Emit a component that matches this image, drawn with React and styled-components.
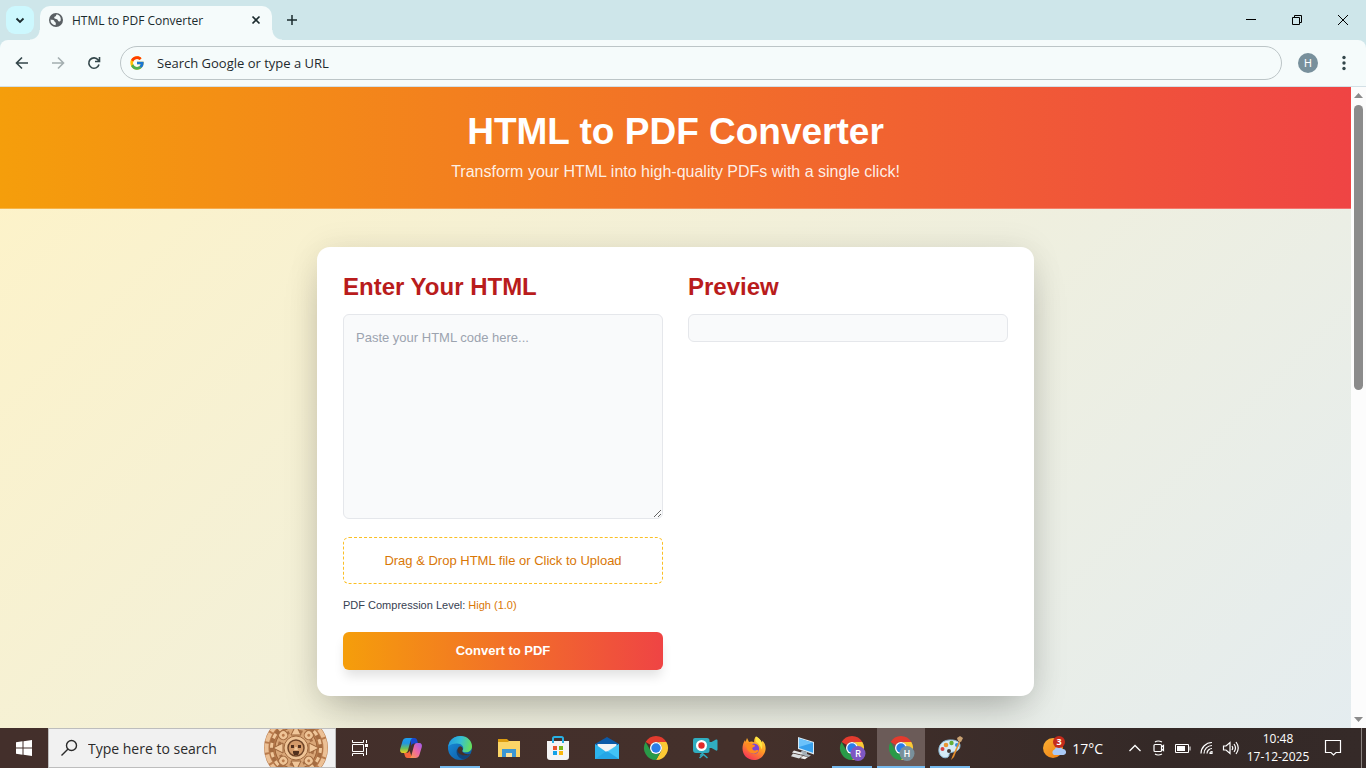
import React from "react";
import styled, { createGlobalStyle, css } from "styled-components";
import { FcGoogle } from "react-icons/fc";

const uiFont = `"Segoe UI", "Open Sans", "Noto Sans", sans-serif`;
const pageFont = `"Liberation Sans", Arial, sans-serif`;
const sunset = "linear-gradient(90deg, #f59e0b, #ef4444)";

const GlobalStyle = createGlobalStyle`
  *, *::before, *::after { box-sizing: border-box; }
  body { margin: 0; overflow: hidden; font-family: ${uiFont}; }
  button, input, textarea { font: inherit; color: inherit; margin: 0; }
  button { border: 0; padding: 0; background: none; cursor: pointer; }
  h1, h2, p { margin: 0; }
  svg { display: block; flex: none; }
`;

const Desktop = styled.div`
  height: 100vh;
  display: flex;
  flex-direction: column;
`;

/* Browser chrome */

const TabStrip = styled.header`
  height: 40px;
  flex: none;
  display: flex;
  align-items: center;
  background: #cee6ea;
  color: #1b2b2e;
`;

const TabSearch = styled.button`
  width: 28px;
  height: 28px;
  margin: 0 6px;
  display: grid;
  place-items: center;
  border-radius: 9px;
  background: #cdf8fe;
`;

const Tab = styled.div`
  position: relative;
  width: 232px;
  height: 34px;
  align-self: flex-end;
  display: flex;
  align-items: center;
  gap: 8px;
  padding: 0 8px 6px;
  margin-right: 10px;
  border-radius: 10px 10px 0 0;
  background: #f5fbfb;
  font-size: 12px;

  &::before, &::after {
    content: "";
    position: absolute;
    bottom: 0;
    width: 10px;
    height: 10px;
  }
  &::before {
    right: 100%;
    background: radial-gradient(circle at 0 0, transparent 9px, #f5fbfb 10px);
  }
  &::after {
    left: 100%;
    background: radial-gradient(circle at 100% 0, transparent 9px, #f5fbfb 10px);
  }
`;

const TabTitle = styled.span`
  flex: 1;
  white-space: nowrap;
`;

const StripButton = styled.button`
  width: ${(p) => p.$w}px;
  height: ${(p) => p.$h || 28}px;
  display: grid;
  place-items: center;
`;

const WindowControls = styled.div`
  margin-left: auto;
  display: flex;
`;

const ToolbarBack = styled.div`
  flex: none;
  background: #cee6ea;
`;

const Toolbar = styled.nav`
  height: 47px;
  display: flex;
  align-items: center;
  padding: 0 14px 0 4px;
  border-radius: 8px 8px 0 0;
  border-bottom: 1px solid #d3e0e6;
  background: #f5fbfb;
  color: #33464a;
`;

const NavButton = styled.button`
  width: 36px;
  height: 32px;
  display: grid;
  place-items: center;
  color: ${(p) => (p.$faded ? "#a3aeb0" : "#33464a")};
`;

const Omnibox = styled.label`
  flex: 1;
  height: 34px;
  margin: 0 16px 0 8px;
  padding: 0 8px;
  display: flex;
  align-items: center;
  gap: 12px;
  border: 1px solid #bcc5c7;
  border-radius: 17px;
`;

const PlainInput = styled.input`
  flex: 1;
  min-width: 0;
  padding: 0;
  border: 0;
  outline: 0;
  background: transparent;
  font-size: ${(p) => p.$size}px;
  &::placeholder { color: ${(p) => p.$color}; opacity: 1; }
`;

const Profile = styled.button`
  width: 20px;
  height: 20px;
  margin-right: 18px;
  border-radius: 50%;
  background: #78909c;
  color: #fff;
  font: 11px Roboto, sans-serif;
`;

/* Page */

const Viewport = styled.div`
  flex: 1;
  min-height: 0;
  display: flex;
`;

const Page = styled.div`
  flex: 1;
  min-width: 0;
  overflow: hidden;
  font-family: ${pageFont};
  background: linear-gradient(135deg, #fef3c7, #dbeafe) 0 0 / 100% 1363px no-repeat;
`;

const Hero = styled.header`
  padding: 26px 20px;
  text-align: center;
  color: #fff;
  background: ${sunset};
  border-bottom: 1px solid rgba(255, 255, 255, 0.25);
`;

const HeroTitle = styled.h1`
  font-size: 37px;
  line-height: 38px;
  font-weight: 700;
`;

const HeroText = styled.p`
  margin-top: 11px;
  font-size: 16px;
  line-height: 20px;
  color: rgba(255, 255, 255, 0.9);
`;

const Card = styled.main`
  max-width: 717px;
  margin: 38px auto;
  padding: 26px;
  display: grid;
  grid-template-columns: 1fr 1fr;
  gap: 25px;
  border-radius: 13px;
  background: #fff;
  box-shadow: 0 20px 40px -10px rgba(0, 0, 0, 0.25), 0 0 32px rgba(0, 0, 0, 0.08);
`;

const Column = styled.section`
  display: flex;
  flex-direction: column;
`;

const Heading = styled.h2`
  margin-bottom: 13px;
  font-size: 24px;
  line-height: 28px;
  color: #b91c1c;
`;

const field = css`
  border: 1px solid #e5e7eb;
  border-radius: 6px;
  background: #f9fafb;
`;

const CodeInput = styled.textarea`
  ${field}
  display: block;
  width: 100%;
  height: 205px;
  padding: 13px 12px;
  font-size: 13px;
  line-height: 19px;
  outline: 0;
  resize: both;
  &::placeholder { color: #9ca3af; }
`;

const PreviewBox = styled.div`
  ${field}
  height: 28px;
`;

const DropZone = styled.label`
  height: 47px;
  margin-top: 18px;
  display: grid;
  place-items: center;
  border: 1px dashed #fbbf24;
  border-radius: 6px;
  color: #d97706;
  font-size: 13px;
  cursor: pointer;
  input { display: none; }
`;

const Level = styled.p`
  margin: 13px 0 19px;
  font-size: 11px;
  line-height: 16px;
  color: #374151;
  span { color: #d97706; }
`;

const ConvertButton = styled.button`
  height: 38px;
  padding-bottom: 2px;
  border-radius: 6px;
  color: #fff;
  font-size: 13px;
  font-weight: 700;
  background: ${sunset};
  box-shadow: 0 8px 12px -2px rgba(0, 0, 0, 0.12);
`;

const ScrollRail = styled.div`
  width: 15px;
  flex: none;
  display: flex;
  flex-direction: column;
  align-items: center;
  padding: 6px 0;
  background: #fcfcfc;
`;

const ScrollThumb = styled.div`
  width: 9px;
  height: 47%;
  margin: 7px 0 auto;
  max-height: 285px;
  border-radius: 5px;
  background: #8b8b8b;
`;

/* Taskbar */

const Taskbar = styled.footer`
  height: 40px;
  flex: none;
  display: flex;
  align-items: stretch;
  color: #fff;
  background: linear-gradient(90deg, #432f2b, #44302b 55%, #342927 85%, #352a28);
`;

const StartButton = styled.button`
  width: 48px;
  display: grid;
  place-items: center;
`;

const SearchBox = styled.label`
  width: 288px;
  display: flex;
  align-items: center;
  gap: 10px;
  padding: 0 7px 0 11px;
  overflow: hidden;
  border: 1px solid #bdbdbd;
  background: #f1f1f1;
  color: #2b2b2b;
`;

const AppList = styled.div`
  display: flex;
  gap: 1px;
  & > :first-child { margin-right: 2px; }
`;

const AppButton = styled.button`
  width: 48px;
  display: grid;
  place-items: center;
  background: ${(p) => (p.$active ? "#6b5b58" : "transparent")};
  background-image: ${(p) => (p.$open || p.$active ? "linear-gradient(#76b9ed, #76b9ed)" : "none")};
  background-repeat: no-repeat;
  background-position: center bottom;
  background-size: ${(p) => (p.$active ? "100%" : "40px")} 2px;
`;

const Tray = styled.div`
  margin-left: auto;
  display: flex;
  align-items: center;
`;

const Weather = styled.button`
  display: flex;
  align-items: center;
  gap: 6px;
  margin-right: 20px;
  font-size: 14px;
`;

const TrayButton = styled.button`
  width: 24px;
  height: 40px;
  display: grid;
  place-items: center;
`;

const Clock = styled.time`
  width: 70px;
  text-align: center;
  font-size: 12px;
  line-height: 18px;
`;

const Notifications = styled.button`
  width: 40px;
  height: 40px;
  margin-right: 8px;
  display: grid;
  place-items: center;
`;

const ShowDesktop = styled.button`
  width: 5px;
  height: 40px;
  border-left: 1px solid #8a8380;
`;

/* Drawings */

const Line = ({ w = 16, h = w, d, sw = 1, box, ...rest }) => (
  <svg width={w} height={h} viewBox={box || `0 0 ${w} ${h}`} fill="none" stroke="currentColor" strokeWidth={sw} {...rest}>
    <path d={d} />
  </svg>
);

const Globe = () => (
  <svg width="16" height="16" viewBox="0 0 16 16">
    <circle cx="8" cy="8" r="7" fill="#5a6064" />
    <path d="M8.5 2.4c-.8 1.2-.3 1.8-1.4 2.2-.9.3-1.2 1.2-.5 2 .8.7 2.2.3 3 1.2.5.7.2 1.4 1.3 1.6.8.1 1.2.2 1.7-.7A5.400 5.400 0 0 0 9.400 2.500zM2.500 7.400c.7.2 2.600.3 3.300.9.7.7.4 1.600 1.500 1.900.8.3.6 1.500.2 3.100A5.500 5.500 0 0 1 2.500 7.400z" fill="#f5fbfb" />
  </svg>
);

const ChromeLogo = ({ badge, badgeColor }) => (
  <svg width="28" height="26" viewBox="-2 0 28 26">
    <path d="M1.600 7A12 12 0 0 1 22.400 7H12a6 6 0 0 0-5.200 3z" fill="#e33b2e" />
    <path d="M22.400 7A12 12 0 0 1 12 25l5.200-9A6 6 0 0 0 12 7z" fill="#fcc934" />
    <path d="M12 25A12 12 0 0 1 1.600 7l5.200 9A6 6 0 0 0 17.200 16z" fill="#299a48" />
    <circle cx="12" cy="13" r="6" fill="#fff" />
    <circle cx="12" cy="13" r="4.700" fill="#2b7de9" />
    {badge && (
      <>
        <circle cx="18" cy="18.500" r="7.500" fill={badgeColor} />
        <text x="18" y="22" fill="#fff" fontFamily="Roboto" fontSize="9" fontWeight="500" textAnchor="middle">{badge}</text>
      </>
    )}
  </svg>
);

const Copilot = () => (
  <svg width="24" height="24" viewBox="0 0 24 24">
    <defs>
      <linearGradient id="cpA" x1="0" y1="0" x2="0" y2="1"><stop stopColor="#1d9ff0" /><stop offset=".35" stopColor="#2095e0" /><stop offset=".7" stopColor="#6cc05a" /><stop offset="1" stopColor="#f2cf1f" /></linearGradient>
      <linearGradient id="cpB" x1="1" y1="0" x2="0" y2="1"><stop stopColor="#9e5bf2" /><stop offset=".5" stopColor="#ef6aa0" /><stop offset="1" stopColor="#f9a13c" /></linearGradient>
    </defs>
    <path d="M11 2h4.500c1.700 0 2.300 1 2.700 2.300l.8 3.200h-4c-1.500 0-2.200 1-2.500 2.500z" fill="#1748cf" />
    <path d="M13 22H8.500c-1.700 0-2.300-1-2.700-2.500L5 17h2.500c1.800 0 2.700-1 3.100-2.500z" fill="#f2663b" />
    <path d="M7.500 2H14c-1.300 0-1.900 1-2.300 2.300L9.200 13.500C8.700 15.700 8 17 6 17H3.800C1.400 17 .7 15.300 1.200 13L3.600 5C4.200 3 5.500 2 7.500 2z" fill="url(#cpA)" />
    <path d="M16.500 22H10c1.300 0 1.900-1 2.300-2.300l2.500-9.200c.5-2.200 1.200-3.500 3.200-3.500h2.200c2.400 0 3.100 1.700 2.600 4L20.400 19c-.6 2-1.900 3-3.900 3z" fill="url(#cpB)" />
  </svg>
);

const Edge = () => (
  <svg width="24" height="24" viewBox="0 0 24 24">
    <defs>
      <linearGradient id="edA" x1="0" y1=".3" x2="1" y2=".5"><stop stopColor="#239be0" /><stop offset=".5" stopColor="#36bfd3" /><stop offset="1" stopColor="#68df58" /></linearGradient>
      <linearGradient id="edB" x1="0" y1="0" x2="1" y2="1"><stop stopColor="#198fdf" /><stop offset="1" stopColor="#0c5498" /></linearGradient>
    </defs>
    <circle cx="12" cy="12" r="12" fill="url(#edB)" />
    <path d="M.3 10.500C1.300 4 6.500 0 12.500 0 19.500 0 24 5 24 10.300c0 4-3 6-6 6-2.500 0-4.300-.8-3.600-1.900C17 11 13.500 7.500 9 7.500c-4 0-7 1-8.700 3z" fill="url(#edA)" />
    <path d="M9.300 12.500C6.800 18 11 23 16 23.300c2.300-.3 4.800-2.300 6.300-4.800-5.800 2.600-12 .2-13-6z" fill="#10457c" />
    <path d="M14.200 14.700c1.300-1.500.6-4-1.700-4.500-2.200.3-3.500 2.600-3 4.800.7 3.200 5.500 5.500 10.500 4.300 1.500-.4 3-1 2.500-1.300-3 .7-8.500-.5-8.300-3.300z" fill="#432f2b" />
  </svg>
);

const Explorer = () => (
  <svg width="24" height="24" viewBox="0 0 24 24">
    <path d="M1 3h9l2 2v4H1z" fill="#dc9c10" />
    <path d="M1 6h10l1-1h11v16H1z" fill="#fbd567" />
    <path d="M5 21v-8h14v8h-4v-4H9v4z" fill="#3b97d3" />
    <path d="M9 17h6v4H9z" fill="#fae19b" />
  </svg>
);

const Store = () => (
  <svg width="24" height="24" viewBox="0 0 24 24">
    <path d="M1 5h22v16q0 3-3 3H4q-3 0-3-3z" fill="#f4f4f4" />
    <path d="M7 7V2.500Q7 1 8.500 1h7Q17 1 17 2.500V7" fill="none" stroke="#28b1e4" strokeWidth="2" />
    <path d="M7 10h4v4H7z" fill="#e8542c" /><path d="M13 10h4v4h-4z" fill="#7cb817" />
    <path d="M7 15h4v4H7z" fill="#12a2e8" /><path d="M13 15h4v4h-4z" fill="#fbb70b" />
  </svg>
);

const Mail = () => (
  <svg width="24" height="22" viewBox="0 0 24 22">
    <path d="M0 7l12-7 12 7v5H0z" fill="#0c5aa8" />
    <path d="M2.500 7h19v6L12 17 2.500 13z" fill="#f3f3f5" />
    <path d="M0 7l12 8.500L24 7v15H0z" fill="#2cb4ed" />
    <path d="M0 22L24 7v15z" fill="#48c8f8" opacity=".75" />
    <path d="M0 22l12-8 12 8z" fill="#1796dd" opacity=".65" />
  </svg>
);

const Recorder = () => (
  <svg width="26" height="24" viewBox="0 0 26 24">
    <path d="M3 2h12q2.500 0 2.500 2.500V6h2L24 3.500q1.500-.5 1.500 1v9q0 1.500-1.500 1L19.500 12h-2v2.500q0 2.500-2.500 2.500H4q-3 0-3-3V4q0-2 2-2z" fill="#30adc0" />
    <circle cx="9.500" cy="9.500" r="5.500" fill="#fff" />
    <circle cx="9.500" cy="9.500" r="3.200" fill="#e22b2b" />
    <path d="M7.500 22l4-3.500 4 3.500M11 17l-3 2.500" fill="none" stroke="#30adc0" strokeWidth="1.500" />
  </svg>
);

const Firefox = () => (
  <svg width="24" height="24" viewBox="0 0 24 24">
    <defs>
      <linearGradient id="ffA" x1=".8" y1="0" x2=".2" y2="1"><stop stopColor="#ffe23d" /><stop offset=".45" stopColor="#ff9a24" /><stop offset="1" stopColor="#f52a5c" /></linearGradient>
    </defs>
    <path d="M14 .5c3 1.700 5 3.500 5.700 6 .6-.4.7-1 .6-2C23 7 24 10.500 23.500 14 22.500 20 17.500 24 12 24 5.500 24 .5 19 .5 12.500c0-3 .9-6 2.500-8.500l.5 2L5 2l2 4c2-1 4-.5 5.200.5C12 4 12.500 2 14 .5z" fill="url(#ffA)" />
    <circle cx="12" cy="12.800" r="5.200" fill="#7b45d6" />
    <path d="M4 7.500c3-1.500 5.500-.8 6.500 1 1.300.2 3 .6 2.500 1.500-.8 1.300-2.200 1-2.700 2-.2 2 1.700 3.200 3.700 2.200 1.300-.5 2.200-.3 2.700.3-1.300 3-5 4-8 2.500C5.500 15 4 12 4 7.500z" fill="#ff8a1f" />
    <path d="M14 .5c3 1.700 5 3.500 5.700 6 .9 2.200.8 5-.2 7-.6-3.800-3-6-5.300-7.500-.8-1.500-.8-4-.2-5.500z" fill="#ffe642" />
  </svg>
);

const RemotePc = () => (
  <svg width="26" height="24" viewBox="0 0 26 24">
    <path d="M8 1l16 5v12.500L8 13z" fill="#dbeaf4" />
    <path d="M9 2.500l14 4.300v10L9 12z" fill="#37a0ed" />
    <path d="M9 2.500l14 4.300L9 11z" fill="#6bc2fa" />
    <path d="M12 14.500l5 1.500v2l4 1.500-2.500 1.500-9-3z" fill="#a5b0b8" />
    <path d="M4 14.500l9 2.500-2 1.500-9-2z" fill="#e6e8e9" />
    <path d="M3 17.500l10 2.300-4 2.700-8-2.200z" fill="#d9dddf" />
    <path d="M13 20l5 1-3 2.200-4.500-1z" fill="#f3f3f3" />
  </svg>
);

const Paint = () => (
  <svg width="26" height="26" viewBox="0 0 26 26">
    <path d="M12 5C5 5.500 1 10.500 2 17c.8 5 6 7 9 5 2-1.500 0-3.500 3-4.500 5-1 9-2 9-7 0-4-5-6-11-5.500z" fill="#d5ebf7" stroke="#8bb9d5" />
    <circle cx="9" cy="10" r="2.300" fill="#e99633" /><circle cx="5.500" cy="14" r="2" fill="#d94141" />
    <circle cx="14.500" cy="8" r="2.200" fill="#62ae36" /><circle cx="20" cy="10" r="2" fill="#378ed7" />
    <circle cx="12" cy="16" r="2" fill="#453a38" />
    <path d="M23 4l-7.500 17-1.500 4 3-3L24 5z" fill="#e7902f" />
    <path d="M20 3l3-2 3 2-2 4-3-1z" fill="#caa272" />
  </svg>
);

const SunStone = () => (
  <svg width="64" height="64" viewBox="-32 -32 64 64">
    <circle r="32" fill="#b97b4c" />
    <circle r="29.500" fill="none" stroke="#ecc095" strokeWidth="4" strokeDasharray="9 2" />
    <circle r="24.500" fill="none" stroke="#a56c41" strokeWidth="4" />
    <circle r="24.500" fill="none" stroke="#f0c699" strokeWidth="3" strokeDasharray="5 4.600" />
    <circle r="21" fill="#d9a677" stroke="#9a6238" />
    <circle r="17" fill="none" stroke="#a87046" strokeWidth="3" strokeDasharray="6 7.350" />
    {[0, 90, 180, 270].map((a) => (
      <path key={a} d="M-5-13L0-23L5-13z" fill="#f0c699" stroke="#9a6238" transform={`rotate(${a})`} />
    ))}
    {[45, 135, 225, 315].map((a) => (
      <g key={a} transform={`rotate(${a})`}>
        <circle cy="-18" r="4.500" fill="#efc496" stroke="#a0693f" />
        <circle cy="-18" r="1.500" fill="#b97b4c" />
      </g>
    ))}
    <circle r="12" fill="#efc496" stroke="#a0693f" />
    <circle r="8" fill="#d39a69" stroke="#6f4427" strokeWidth="1.500" />
    <path d="M-5-3h3v3h-3zM2-3h3v3H2zM-3 3h6v2l-1 2h-4l-1-2z" fill="#51301d" />
    <path d="M-1-1h2l1 3h-4z" fill="#f0c699" />
  </svg>
);

const WeatherIcon = () => (
  <svg width="24" height="24" viewBox="0 0 24 24">
    <defs><linearGradient id="sun" x1="0" y1="0" x2="1" y2="1"><stop stopColor="#fbb034" /><stop offset="1" stopColor="#ee7d11" /></linearGradient></defs>
    <circle cx="11" cy="12" r="10" fill="url(#sun)" />
    <path d="M12 19a3 3 0 0 1 .5-5.500 4.500 4.500 0 0 1 8-.5 3 3 0 0 1 1 6z" fill="#a9c9f6" />
    <circle cx="17" cy="6" r="6" fill="#c42b1c" />
    <text x="17" y="9" fill="#fff" fontFamily="Open Sans" fontSize="9" fontWeight="700" textAnchor="middle">3</text>
  </svg>
);

const apps = [
  {
    name: "Task view",
    icon: (
      <svg width="18" height="18" viewBox="0 0 18 18" fill="none" stroke="#fff">
        <path d="M1.500 1v2.500h11V1M1.500 17v-2.500h11V17M1.500 5.500h11v7h-11zM15.500 1v3M15.500 9v7" />
        <path d="M14 5h3v3h-3z" fill="#fff" stroke="none" />
      </svg>
    ),
  },
  { name: "Copilot", icon: <Copilot /> },
  { name: "Microsoft Edge", icon: <Edge />, open: true },
  { name: "File Explorer", icon: <Explorer /> },
  { name: "Microsoft Store", icon: <Store /> },
  { name: "Mail", icon: <Mail /> },
  { name: "Google Chrome", icon: <ChromeLogo /> },
  { name: "Screen recorder", icon: <Recorder /> },
  { name: "Firefox", icon: <Firefox /> },
  { name: "Remote desktop", icon: <RemotePc /> },
  { name: "Chrome, profile R", icon: <ChromeLogo badge="R" badgeColor="#7e57c2" />, open: true },
  { name: "Chrome, profile H", icon: <ChromeLogo badge="H" badgeColor="#78909c" />, active: true },
  { name: "Paint", icon: <Paint />, open: true },
];

const tray = [
  { name: "Show hidden icons", icon: <Line w={14} d="M1.500 10L7 4.500 12.500 10" sw={1.300} /> },
  { name: "Meet Now", icon: <Line w={16} d="M4 4.500h5.500q1 0 1 1v5q0 1-1 1H4q-1 0-1-1v-5q0-1 1-1zM10.500 7l2-1.500v5l-2-1.500M4 2q3-2 7 0M4 14q3 2 7 0" sw={1.200} /> },
  { name: "Battery", icon: <svg width="16" height="16" viewBox="0 0 16 16"><path d="M.5 4.500h13v8h-13zM15 6.500v4" fill="none" stroke="#fff" /><path d="M2 6h8v5H2z" fill="#fff" /></svg> },
  { name: "Network", icon: <Line w={16} d="M2 13.500A11 11 0 0 1 13 2.500M5 13.500a8 8 0 0 1 8-8M8 13.500a5 5 0 0 1 5-5M11 13.500a2 2 0 0 1 2-2v2z" sw={1.200} /> },
  { name: "Volume", icon: <Line w={18} h={16} d="M1.500 6h2.500l4-3.500v11L4 10H1.500zM10 6q1.500 2 0 4M12 4q3 4 0 8M14 2q4.500 6 0 12" sw={1.200} /> },
];

export default function App() {
  return (
    <Desktop>
      <GlobalStyle />
      <TabStrip>
        <TabSearch aria-label="Search tabs"><Line w={10} d="M1.500 3.500L5 7l3.500-3.500" sw={1.800} /></TabSearch>
        <Tab>
          <Globe />
          <TabTitle>HTML to PDF Converter</TabTitle>
          <StripButton $w={16} aria-label="Close tab"><Line w={10} d="M1.500 1.500l7 7m0-7l-7 7" sw={1.700} /></StripButton>
        </Tab>
        <StripButton $w={20} aria-label="New tab"><Line w={12} d="M6 1v10M1 6h10" sw={1.500} /></StripButton>
        <WindowControls>
          <StripButton $w={46} $h={40} aria-label="Minimize"><Line w={10} d="M0 4.500h10" stroke="#000" /></StripButton>
          <StripButton $w={46} $h={40} aria-label="Restore"><Line w={10} d="M.5 2.500h7v7h-7zM2.500 2.500v-2h7v7h-2" stroke="#000" /></StripButton>
          <StripButton $w={46} $h={40} aria-label="Close"><Line w={10} d="M0 0l10 10M10 0L0 10" stroke="#000" /></StripButton>
        </WindowControls>
      </TabStrip>
      <ToolbarBack>
        <Toolbar>
          <NavButton aria-label="Back"><Line w={14} d="M13 7H2M7 1.500L1.500 7 7 12.500" sw={1.600} /></NavButton>
          <NavButton $faded aria-label="Forward"><Line w={14} d="M1 7h11M7 1.500L12.500 7 7 12.500" sw={1.600} /></NavButton>
          <NavButton aria-label="Reload"><Line w={14} d="M12 8.500A5.200 5.200 0 1 1 11.200 4L12.500 5.500M12.500 1v4.500H8" sw={1.600} /></NavButton>
          <Omnibox>
            <FcGoogle size={16} />
            <PlainInput $size={13} $color="#1f2a2d" aria-label="Address" placeholder="Search Google or type a URL" />
          </Omnibox>
          <Profile aria-label="Profile H">H</Profile>
          <StripButton $w={16} aria-label="Menu">
            <svg width="4" height="16" viewBox="0 0 4 16" fill="#33464a"><circle cx="2" cy="2.500" r="1.700" /><circle cx="2" cy="8" r="1.700" /><circle cx="2" cy="13.500" r="1.700" /></svg>
          </StripButton>
        </Toolbar>
      </ToolbarBack>
      <Viewport>
        <Page>
          <Hero>
            <HeroTitle>HTML to PDF Converter</HeroTitle>
            <HeroText>Transform your HTML into high-quality PDFs with a single click!</HeroText>
          </Hero>
          <Card>
            <Column>
              <Heading id="source">Enter Your HTML</Heading>
              <CodeInput aria-labelledby="source" placeholder="Paste your HTML code here..." />
              <DropZone>
                Drag &amp; Drop HTML file or Click to Upload
                <input type="file" accept=".html" />
              </DropZone>
              <Level>PDF Compression Level: <span>High (1.0)</span></Level>
              <ConvertButton>Convert to PDF</ConvertButton>
            </Column>
            <Column>
              <Heading>Preview</Heading>
              <PreviewBox />
            </Column>
          </Card>
        </Page>
        <ScrollRail>
          <svg width="9" height="5" viewBox="0 0 9 5"><path d="M0 5L4.500 0 9 5z" fill="#8b8b8b" /></svg>
          <ScrollThumb />
          <svg width="9" height="5" viewBox="0 0 9 5"><path d="M0 0L4.500 5 9 0z" fill="#8b8b8b" /></svg>
        </ScrollRail>
      </Viewport>
      <Taskbar>
        <StartButton aria-label="Start">
          <svg width="16" height="16" viewBox="0 0 16 16" fill="#fff"><path d="M0 2.200l6.500-.9v6.200H0zM7.500 1.200L16 0v7.500H7.500zM0 8.500h6.500v6.200L0 13.800zM7.500 8.500H16V16l-8.500-1.200z" /></svg>
        </StartButton>
        <SearchBox>
          <Line w={18} d="M7.800 10.200L1.500 16.500M16.500 6.500a5 5 0 1 1-10 0 5 5 0 1 1 10 0z" sw={1.400} />
          <PlainInput $size={14} $color="#2b2b2b" aria-label="Search" placeholder="Type here to search" />
          <SunStone />
        </SearchBox>
        <AppList>
          {apps.map((a) => (
            <AppButton key={a.name} aria-label={a.name} $open={a.open} $active={a.active}>{a.icon}</AppButton>
          ))}
        </AppList>
        <Tray>
          <Weather><WeatherIcon />17°C</Weather>
          {tray.map((t) => <TrayButton key={t.name} aria-label={t.name}>{t.icon}</TrayButton>)}
          <Clock>10:48<br />17-12-2025</Clock>
          <Notifications aria-label="Notifications"><Line w={18} d="M1.500 1.500h15v12H12l-2.500 2.500L7 13.500H1.500z" sw={1.200} /></Notifications>
          <ShowDesktop aria-label="Show desktop" />
        </Tray>
      </Taskbar>
    </Desktop>
  );
}
